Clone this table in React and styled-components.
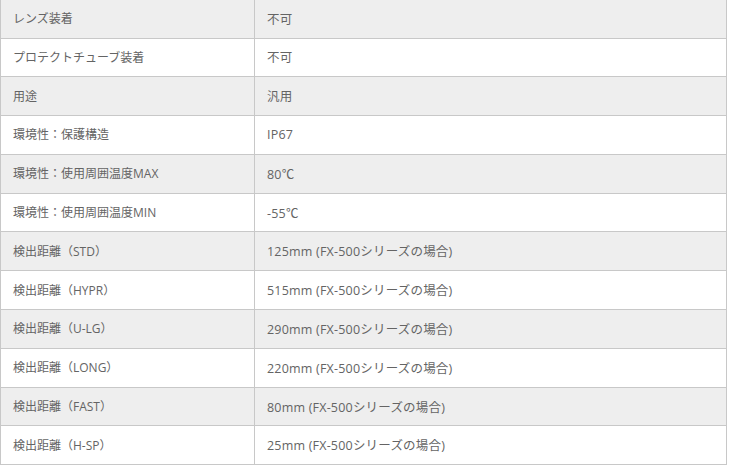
import React from "react";
import styled, { createGlobalStyle } from "styled-components";

const GlobalStyle = createGlobalStyle`
  html, body {
    margin: 0;
    padding: 0;
    background: #ffffff;
  }
`;

// spec rows shown in the table
const specs = [
  ["レンズ装着", "不可"],
  ["プロテクトチューブ装着", "不可"],
  ["用途", "汎用"],
  ["環境性：保護構造", "IP67"],
  ["環境性：使用周囲温度MAX", "80℃"],
  ["環境性：使用周囲温度MIN", "-55℃"],
  ["検出距離（STD）", "125mm (FX-500シリーズの場合)"],
  ["検出距離（HYPR）", "515mm (FX-500シリーズの場合)"],
  ["検出距離（U-LG）", "290mm (FX-500シリーズの場合)"],
  ["検出距離（LONG）", "220mm (FX-500シリーズの場合)"],
  ["検出距離（FAST）", "80mm (FX-500シリーズの場合)"],
  ["検出距離（H-SP）", "25mm (FX-500シリーズの場合)"],
];

function App() {
  return (
    <>
      <GlobalStyle />
      <Wrapper>
        <SpecTable>
          <colgroup>
            <col style={{ width: "254px" }} />
            <col />
          </colgroup>
          <tbody>
            {specs.map(([label, value], index) => (
              <Row key={index} $shaded={index % 2 === 0}>
                <LabelCell>{label}</LabelCell>
                <ValueCell>{value}</ValueCell>
              </Row>
            ))}
          </tbody>
        </SpecTable>
      </Wrapper>
    </>
  );
}

const Wrapper = styled.div`
  width: 730px;
  height: 468px;
  overflow: hidden;
`;

const SpecTable = styled.table`
  width: 727px;
  margin-top: -1.3px;
  border-collapse: collapse;
  table-layout: fixed;
  font-family: "Open Sans", "Noto Sans CJK JP", sans-serif;
  font-size: 12px;
  color: #646464;
`;

const Row = styled.tr`
  background: ${(props) => (props.$shaded ? "#eeeeee" : "#ffffff")};
`;

const Cell = styled.td`
  height: 38.8px;
  box-sizing: border-box;
  padding: 0 12px 1px;
  border: 1px solid #c8c8c8;
  vertical-align: middle;
  white-space: nowrap;
`;

const LabelCell = styled(Cell)``;

const ValueCell = styled(Cell)`
  font-size: 12.5px;
  letter-spacing: 0.2px;
`;

export default App;
